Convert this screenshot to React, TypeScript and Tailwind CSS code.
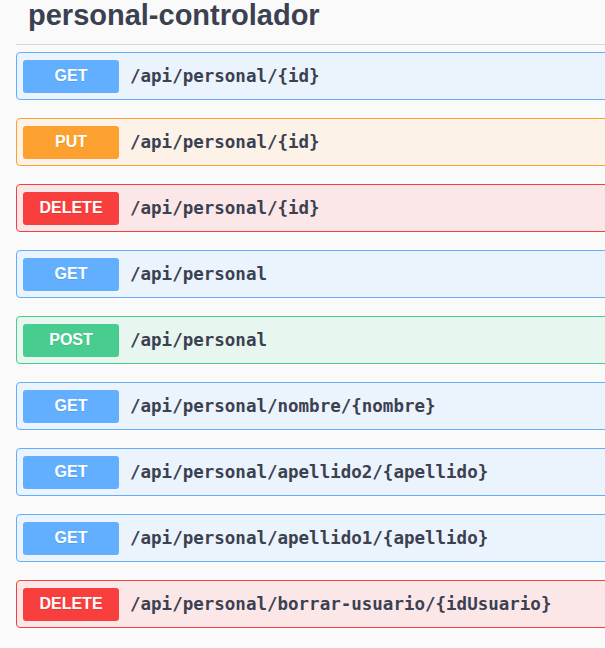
import React from 'react';

type Method = 'GET' | 'PUT' | 'DELETE' | 'POST';

const styles: Record<Method, { row: string; badge: string }> = {
  GET: { row: 'bg-[#ebf3fc] border-[#61affe]', badge: 'bg-[#61affe]' },
  PUT: { row: 'bg-[#fcf2e8] border-[#fca130]', badge: 'bg-[#fca130]' },
  DELETE: { row: 'bg-[#fbe7e7] border-[#f93e3e]', badge: 'bg-[#f93e3e]' },
  POST: { row: 'bg-[#e8f6f0] border-[#49cc90]', badge: 'bg-[#49cc90]' },
};

const endpoints: { method: Method; path: string }[] = [
  { method: 'GET', path: '/api/personal/{id}' },
  { method: 'PUT', path: '/api/personal/{id}' },
  { method: 'DELETE', path: '/api/personal/{id}' },
  { method: 'GET', path: '/api/personal' },
  { method: 'POST', path: '/api/personal' },
  { method: 'GET', path: '/api/personal/nombre/{nombre}' },
  { method: 'GET', path: '/api/personal/apellido2/{apellido}' },
  { method: 'GET', path: '/api/personal/apellido1/{apellido}' },
  { method: 'DELETE', path: '/api/personal/borrar-usuario/{idUsuario}' },
];

function Operation({ method, path }: { method: Method; path: string }) {
  const s = styles[method];
  return (
    <div className={`flex items-center h-[48px] w-[620px] border rounded-[4px] px-[6px] ${s.row}`}>
      <span
        className={`flex items-center justify-center w-[96px] h-[33px] rounded-[3px] text-white font-bold text-[16px] [text-shadow:0_1px_0_rgba(0,0,0,0.1)] ${s.badge}`}
        style={{ fontFamily: '"Liberation Sans", Arial, sans-serif' }}
      >
        {method}
      </span>
      <span
        className="ml-[11px] text-[#3b4151] font-bold text-[17.5px]"
        style={{ fontFamily: '"DejaVu Sans Mono", monospace' }}
      >
        {path}
      </span>
    </div>
  );
}

export default function App() {
  return (
    <div
      className="w-[605px] h-[648px] overflow-hidden bg-[#fafafa]"
      style={{ fontFamily: '"Liberation Sans", Arial, sans-serif' }}
    >
      <div className="pl-4">
        <h1 className="h-[44px] pl-3 text-[29px] leading-[30px] font-bold text-[#3b4151]">
          personal-controlador
        </h1>
        <div className="h-px bg-[#d9d9d9]" />
        <div className="flex flex-col gap-[18px] pt-[7px]">
          {endpoints.map((e, i) => (
            <Operation key={i} method={e.method} path={e.path} />
          ))}
        </div>
      </div>
    </div>
  );
}
